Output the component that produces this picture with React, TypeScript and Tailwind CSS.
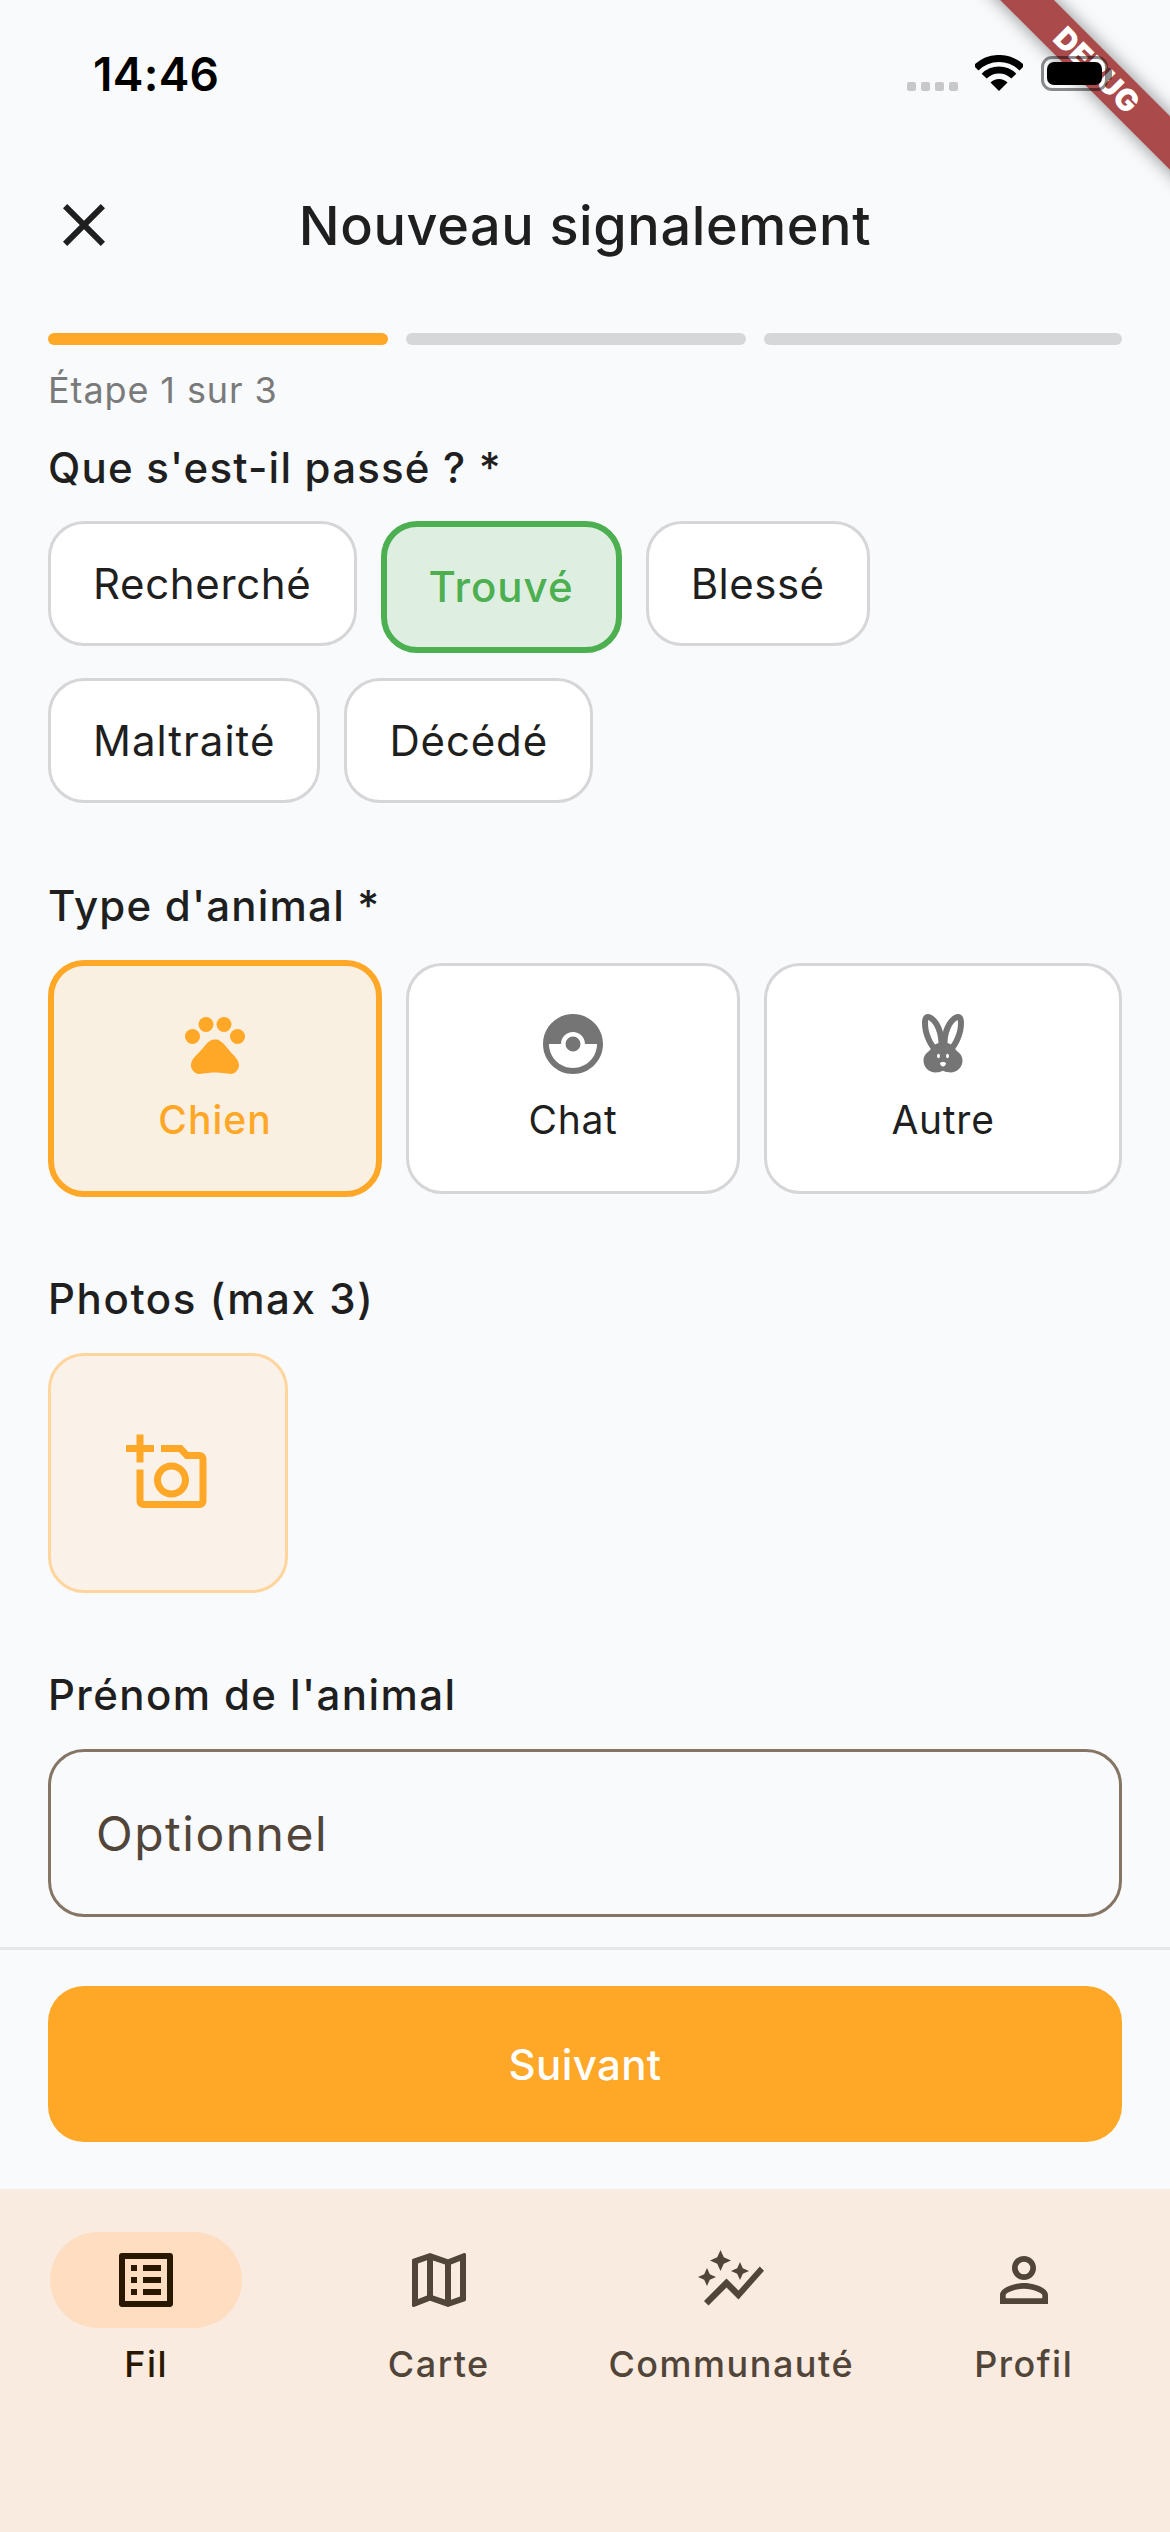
import React from "react";
import {
  MdClose,
  MdPets,
  MdCatchingPokemon,
  MdCrueltyFree,
  MdOutlineAddAPhoto,
  MdListAlt,
  MdOutlineMap,
  MdAutoGraph,
  MdPersonOutline,
} from "react-icons/md";

function Chip({ label, className }: { label: string; className: string }) {
  return (
    <div className={"h-[125px] flex items-center rounded-[36px] border-[3px] border-[#d6d6d8] bg-white px-[42px] text-[42px] leading-[60px] text-[#1f1f1f] " + className}>
      {label}
    </div>
  );
}

function Label({ children, className }: { children: React.ReactNode; className: string }) {
  return <div className={"text-[42px] leading-[60px] font-medium text-[#1f1f1f] " + className}>{children}</div>;
}

function Tab({ icon, label, active }: { icon: React.ReactNode; label: string; active?: boolean }) {
  return (
    <div className="flex flex-col items-center">
      <div className={"w-[192px] h-[96px] rounded-full flex items-center justify-center " + (active ? "bg-[#ffddc0] text-[#2a1700]" : "text-[#51453a]")}>{icon}</div>
      <div className={"mt-[12px] text-[36px] leading-[48px] font-medium tracking-[1.5px] whitespace-nowrap " + (active ? "text-[#2a1700]" : "text-[#51453a]")}>{label}</div>
    </div>
  );
}

export default function App() {
  return (
    <div className="relative w-[1170px] h-[2532px] overflow-hidden bg-[#f9fafc] flex flex-col [font-family:Inter,sans-serif]">
      {/* Debug ribbon */}
      <div className="absolute z-10 left-[897px] top-[51px] w-[400px] h-[38px] rotate-45 bg-[#aa4a4b] shadow-[0_0_18px_rgba(0,0,0,0.45)] flex items-center justify-center text-white text-[30px] font-black tracking-[0.5px] leading-none">
        DEBUG
      </div>

      {/* Status bar */}
      <div className="h-[141px] shrink-0">
        <div className="h-[91px] flex items-end justify-between pl-[93px] pr-[58px]">
          <div className="text-[46px] leading-[47px] -mb-[7px] font-semibold tracking-[0.3px] text-black">14:46</div>
          <div className="relative z-20 flex items-end">
            <div className="flex gap-[5px] mr-[17px]">
              <div className="w-[9px] h-[9px] rounded-[2px] bg-[#c8c8ca]" />
              <div className="w-[9px] h-[9px] rounded-[2px] bg-[#c8c8ca]" />
              <div className="w-[9px] h-[9px] rounded-[2px] bg-[#c8c8ca]" />
              <div className="w-[9px] h-[9px] rounded-[2px] bg-[#c8c8ca]" />
            </div>
            <svg width="48" height="36" viewBox="0 0 48 36" className="mr-[18px]">
              <path d="M1 13A32.5 32.5 0 0 1 47 13" fill="none" stroke="#000" strokeWidth="7" />
              <path d="M9.15 21.15A21 21 0 0 1 38.85 21.15" fill="none" stroke="#000" strokeWidth="7" />
              <path d="M24 36L15.5 27.5A12 12 0 0 1 32.5 27.5Z" fill="#000" />
            </svg>
            <div className="flex items-center">
              <div className="w-[67px] h-[35px] rounded-[11px] border-[3px] border-[#00000073] p-[3px]">
                <div className="w-full h-full rounded-[7px] bg-black" />
              </div>
              <div className="w-[4px] h-[12px] rounded-r-[3px] bg-[#00000073]" />
            </div>
          </div>
        </div>
      </div>

      {/* App bar */}
      <div className="h-[168px] shrink-0 relative flex items-center justify-center">
        <MdClose className="absolute left-[48px] top-[48px] text-[#1f1f1f]" size={72} />
        <div className="pt-[2px] text-[54px] leading-[72px] font-medium tracking-[0.6px] text-[#1f1f1f]">Nouveau signalement</div>
      </div>

      {/* Scrollable body */}
      <div className="flex-1 min-h-0 overflow-hidden px-[48px]">
        <div className="mt-[24px] flex gap-[18px]">
          <div className="w-[340px] h-[12px] rounded-full bg-[#ffa726]" />
          <div className="w-[340px] h-[12px] rounded-full bg-[#d6d7d9]" />
          <div className="w-[358px] h-[12px] rounded-full bg-[#d6d7d9]" />
        </div>
        <div className="mt-[21px] text-[36px] leading-[48px] tracking-[0.9px] text-[#7a7a7a]">Étape 1 sur 3</div>
        <Label className="mt-[24px] tracking-[1.2px]">Que s'est-il passé ? *</Label>
        <div className="mt-[23px] flex flex-wrap items-start gap-x-[24px] gap-y-[25px]">
          <Chip label="Recherché" className="tracking-[0.65px]" />
          <div className="h-[132px] flex items-center rounded-[36px] border-[6px] border-[#4caf50] bg-[#deeee0] px-[42px] text-[42px] leading-[60px] font-medium tracking-[1px] text-[#4caf50]">
            Trouvé
          </div>
          <Chip label="Blessé" className="tracking-[0.5px]" />
          <Chip label="Maltraité" className="tracking-[1px]" />
          <Chip label="Décédé" className="tracking-[0.85px]" />
        </div>

        <Label className="mt-[73px] tracking-[1.2px]">Type d'animal *</Label>
        <div className="mt-[24px] grid grid-cols-[334px_334px_358px] gap-x-[24px] items-center">
          <div className="h-[237px] rounded-[36px] border-[6px] border-[#ffa726] bg-[#faf0e2] flex flex-col items-center justify-center text-[#ffa726]">
            <MdPets size={72} />
            <div className="mt-[10px] text-[39px] leading-[60px] font-medium tracking-[1px]">Chien</div>
          </div>
          <div className="h-[231px] rounded-[36px] border-[3px] border-[#d6d6d8] bg-white flex flex-col items-center justify-center">
            <MdCatchingPokemon size={72} className="text-[#757575]" />
            <div className="mt-[10px] text-[39px] leading-[60px] tracking-[0.75px] text-[#1f1f1f]">Chat</div>
          </div>
          <div className="h-[231px] rounded-[36px] border-[3px] border-[#d6d6d8] bg-white flex flex-col items-center justify-center">
            <MdCrueltyFree size={72} className="text-[#757575]" />
            <div className="mt-[10px] text-[39px] leading-[60px] tracking-[0.75px] text-[#1f1f1f]">Autre</div>
          </div>
        </div>

        <Label className="mt-[72px] tracking-[1.6px]">Photos (max 3)</Label>
        <div className="mt-[24px] w-[240px] h-[240px] rounded-[36px] border-[3px] border-[#ffd59e] bg-[#faf2e9] flex items-center justify-center text-[#ffa726]">
          <MdOutlineAddAPhoto size={84} />
        </div>

        <Label className="mt-[72px] tracking-[1.4px]">Prénom de l'animal</Label>
        <div className="mt-[24px] h-[168px] rounded-[36px] border-[3px] border-[#857565] flex items-center pl-[45px] pt-[2px] text-[48px] tracking-[1.5px] text-[#51453a]">
          Optionnel
        </div>
      </div>

      {/* Bottom action */}
      <div className="h-[242px] shrink-0 border-t-[3px] border-[#e5e7ea] pt-[36px] px-[48px]">
        <div className="h-[156px] rounded-[36px] bg-[#ffa726] flex items-center justify-center text-white text-[42px] font-medium tracking-[0.4px]">
          Suivant
        </div>
      </div>

      {/* Navigation */}
      <div className="h-[343px] shrink-0 bg-[#faebe0] pt-[43px] grid grid-cols-4">
        <Tab active label="Fil" icon={<MdListAlt size={72} />} />
        <Tab label="Carte" icon={<MdOutlineMap size={72} />} />
        <Tab label="Communauté" icon={<MdAutoGraph size={72} />} />
        <Tab label="Profil" icon={<MdPersonOutline size={72} />} />
      </div>
    </div>
  );
}
